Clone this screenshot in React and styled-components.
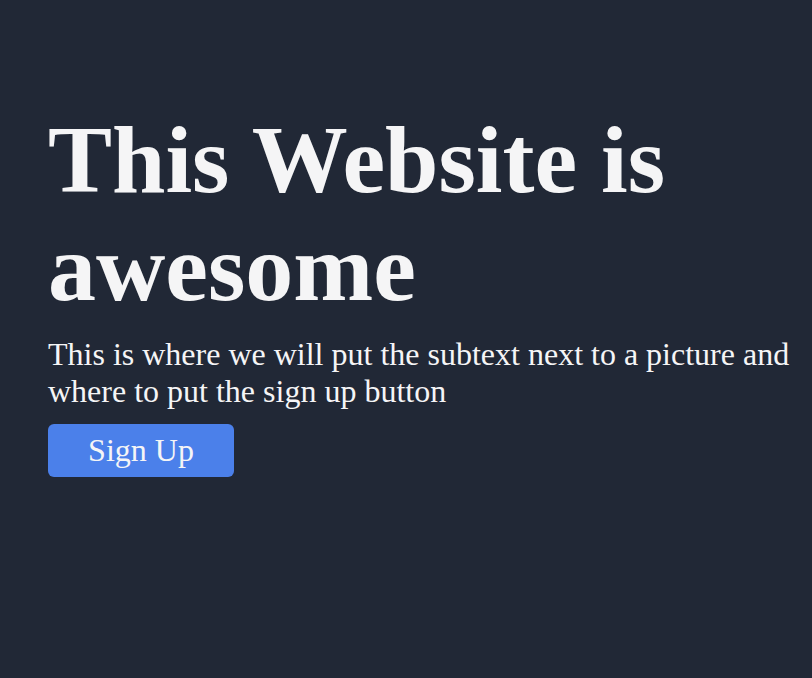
import styled, {createGlobalStyle} from 'styled-components';

const GlobalStyle = createGlobalStyle`
  html, body {
    margin: 0;
    padding: 0;
    background: #212836;
  }
`;

const Page = styled.main`
  min-height: 678px;
  background: #212836;
  padding: 106px 0 0 48px;
  box-sizing: border-box;
  font-family: "Liberation Serif", "Times New Roman", serif;
  color: #f5f5f6;
`;

const Hero = styled.section`
  display: flex;
  flex-direction: column;
  align-items: flex-start;
`;

const Title = styled.h1`
  margin: 0;
  font-size: 96px;
  font-weight: 700;
  line-height: 108px;
`;

const Subtext = styled.p`
  margin: 14px 0 0;
  font-size: 32px;
  line-height: 37px;
`;

const SignUpButton = styled.button`
  margin-top: 14px;
  width: 186px;
  height: 53px;
  padding: 0;
  border: none;
  border-radius: 6px;
  background: #4b80ea;
  color: #f5f5f6;
  font-family: inherit;
  font-size: 32px;
  cursor: pointer;
`;

const App = () => (
  <>
    <GlobalStyle />
    <Page>
      <Hero>
        <Title>This Website is awesome</Title>
        <Subtext>
          This is where we will put the subtext next to a picture and where to
          put the sign up button
        </Subtext>
        <SignUpButton>Sign Up</SignUpButton>
      </Hero>
    </Page>
  </>
);

export default App;
